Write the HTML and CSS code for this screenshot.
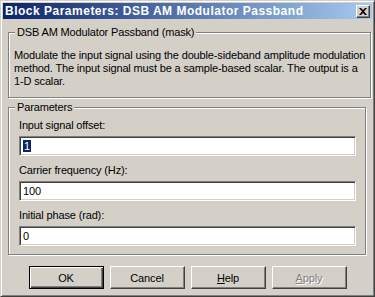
FILE: index.html
```html
<!DOCTYPE html>
<html lang="en">
<head>
    <meta charset="UTF-8">
    <title>Block Parameters: DSB AM Modulator Passband</title>
    <link rel="stylesheet" href="styles.css">
</head>
<body>
    <div class="window">
        <div class="titlebar">
            <span class="title">Block Parameters: DSB AM Modulator Passband</span>
            <span class="close-btn">
                <svg width="8" height="7" viewBox="0 0 8 7"><path d="M0 0h2l2 2 2-2h2L5 3.5 8 7H6L4 5 2 7H0l3-3.5z" fill="#000"/></svg>
            </span>
        </div>

        <fieldset class="group">
            <legend>DSB AM Modulator Passband (mask)</legend>
            <p class="desc">Modulate the input signal using the double-sideband amplitude modulation<br>method. The input signal must be a sample-based scalar. The output is a<br>1-D scalar.</p>
        </fieldset>

        <fieldset class="group params">
            <legend>Parameters</legend>
            <label for="offset">Input signal offset:</label>
            <div class="field" id="offset"><span class="sel">1</span></div>

            <label for="freq">Carrier frequency (Hz):</label>
            <div class="field" id="freq">100</div>

            <label for="phase">Initial phase (rad):</label>
            <div class="field" id="phase">0</div>
        </fieldset>

        <div class="buttons">
            <div class="btn default"><span>OK</span></div>
            <div class="btn"><span>Cancel</span></div>
            <div class="btn"><span><u>H</u>elp</span></div>
            <div class="btn disabled"><span><u>A</u>pply</span></div>
        </div>
    </div>
</body>
</html>
```

FILE: styles.css
```css
body {
    margin: 0;
    background: #d4d0c8;
    font-family: "Liberation Sans", Arial, sans-serif;
    font-size: 11px;
    letter-spacing: -0.15px;
    color: #000;
}
.window {
    width: 375px;
    height: 297px;
    box-sizing: border-box;
    background: #d4d0c8;
    border: 1px solid;
    border-color: #d4d0c8 #404040 #404040 #d4d0c8;
    box-shadow: inset 1px 1px #fff, inset -1px -1px #808080;
    padding: 2px;
}
.titlebar {
    height: 16px;
    display: flex;
    align-items: center;
    justify-content: space-between;
    padding: 0 2px 0 2px;
    background: linear-gradient(to right, #0a246a, #a6caf0);
}
.title {
    color: #fff;
    font-weight: bold;
    font-size: 12px;
    letter-spacing: 0.5px;
}
.close-btn {
    width: 12px;
    height: 11px;
    display: flex;
    align-items: center;
    justify-content: center;
    background: #d4d0c8;
    border: 1px solid;
    border-color: #fff #404040 #404040 #fff;
    box-shadow: inset -1px -1px #808080;
}

/* group boxes */
.group {
    margin: 7px 6px 0 5px;
    padding: 10px 5px 9px 5px;
    border: 1px solid #808080;
    box-shadow: inset 1px 1px #fff, 1px 1px #fff;
}
.group legend {
    margin-left: 1px;
    padding: 0 2px;
    line-height: 13px;
    background: #d4d0c8;
}
.desc {
    margin: 0;
    line-height: 13px;
    white-space: nowrap;
}
.params {
    margin-top: 3px;
    padding-top: 5px;
    padding-bottom: 8px;
}
.params label {
    display: block;
    line-height: 13px;
    margin: 0 0 4px 5px;
}
.field {
    height: 20px;
    box-sizing: border-box;
    margin: 0 0 8px 5px;
    width: 337px;
    background: #fff;
    border: 1px solid;
    border-color: #808080 #fff #fff #808080;
    box-shadow: inset 1px 1px #404040, inset -1px -1px #d4d0c8;
    padding: 2px 3px;
    line-height: 14px;
}
.field:last-child {
    margin-bottom: 0;
}
.sel {
    background: #0a246a;
    color: #fff;
    padding: 0 1px;
}

/* buttons */
.buttons {
    display: flex;
    justify-content: center;
    gap: 6px;
    margin-top: 11px;
}
.btn {
    width: 75px;
    height: 23px;
    box-sizing: border-box;
    display: flex;
    align-items: center;
    justify-content: center;
    border: 1px solid;
    border-color: #fff #404040 #404040 #fff;
    box-shadow: inset -1px -1px #808080;
}
.btn.default {
    border: 1px solid #000;
    box-shadow: inset 1px 1px #fff, inset -1px -1px #404040, inset -2px -2px #808080;
}
.btn.disabled {
    color: #808080;
    text-shadow: 1px 1px #fff;
}
```
